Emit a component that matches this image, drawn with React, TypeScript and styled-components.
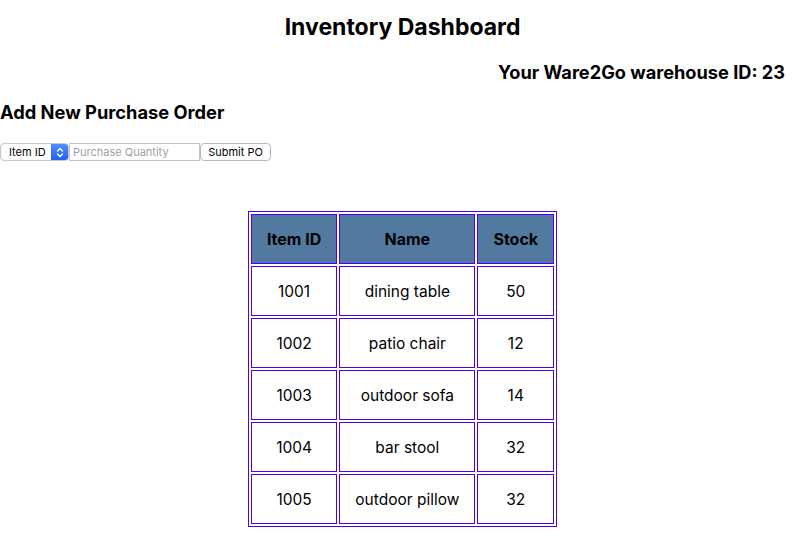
import React from "react";
import styled, { createGlobalStyle } from "styled-components";

const Global = createGlobalStyle`
  html, body { margin: 0; padding: 0; background: #fff; }
  body { font-family: Inter, "Noto Sans", sans-serif; color: #000; }
`;

const Page = styled.div`
  display: flex;
  flex-direction: column;
`;

const Title = styled.h1`
  margin: 13px 0 0;
  padding-left: 7px;
  font-size: 23px;
  line-height: 29px;
  font-weight: 700;
  text-align: center;
`;

const Warehouse = styled.h2`
  margin: 19px 13px 0 0;
  font-size: 18.2px;
  line-height: 23px;
  font-weight: 700;
  text-align: right;
`;

const Section = styled.h3`
  margin: 17px 0 0;
  font-size: 18.3px;
  line-height: 22px;
  font-weight: 700;
`;

const Form = styled.form`
  display: flex;
  align-items: center;
  margin-top: 20px;
  height: 18px;
`;

const SelectBox = styled.div`
  position: relative;
  display: flex;
  align-items: center;
  width: 69px;
  height: 18px;
  box-sizing: border-box;
  border: 1px solid #c8c8c8;
  border-radius: 4px;
  background: #fff;
  font-size: 11px;
  padding-left: 8px;
  overflow: hidden;
`;

const SelectArrow = styled.div`
  position: absolute;
  right: 0;
  top: 0;
  bottom: 0;
  width: 17px;
  background: linear-gradient(#4f8dff, #1f62f5);
  display: flex;
  align-items: center;
  justify-content: center;
`;

const Input = styled.input`
  width: 131px;
  height: 18px;
  box-sizing: border-box;
  border: 1px solid #c4c4c4;
  padding: 0 3px;
  font-family: inherit;
  font-size: 11px;
  outline: none;
  &::placeholder { color: #a0a0a0; }
`;

const Button = styled.button`
  width: 71px;
  height: 18px;
  box-sizing: border-box;
  border: 1px solid #b9b9b9;
  border-radius: 4px;
  background: #fff;
  font-family: inherit;
  font-size: 11px;
  padding: 0;
  color: #000;
`;

const TableWrap = styled.div`
  display: flex;
  justify-content: center;
  margin-top: 50px;
  padding-left: 7px;
`;

const Table = styled.table`
  border: 1px solid #4a00ff;
  border-spacing: 2px;
  font-size: 15.5px;
`;

const Th = styled.th`
  border: 1px solid #4a00ff;
  background: #527aa0;
  padding: 15px;
  line-height: 18px;
  font-size: 16px;
  font-weight: 700;
`;

const Td = styled.td`
  border: 1px solid #4a00ff;
  padding: 16px 15px 14px;
  line-height: 18px;
  text-align: center;
`;

const rows = [
  [1001, "dining table", 50],
  [1002, "patio chair", 12],
  [1003, "outdoor sofa", 14],
  [1004, "bar stool", 32],
  [1005, "outdoor pillow", 32],
];

export default function App() {
  return (
    <Page>
      <Global />
      <Title>Inventory Dashboard</Title>
      <Warehouse>Your Ware2Go warehouse ID: 23</Warehouse>
      <Section>Add New Purchase Order</Section>
      <Form onSubmit={(e) => e.preventDefault()}>
        <SelectBox>
          Item ID
          <SelectArrow>
            <svg width="8" height="11" viewBox="0 0 8 11">
              <path d="M1.5 4 L4 1.5 L6.5 4 M1.5 7 L4 9.5 L6.5 7" stroke="#fff" strokeWidth="1.4" fill="none" strokeLinecap="round" strokeLinejoin="round" />
            </svg>
          </SelectArrow>
        </SelectBox>
        <Input placeholder="Purchase Quantity" />
        <Button type="submit">Submit PO</Button>
      </Form>
      <TableWrap>
        <Table>
          <thead>
            <tr>
              <Th>Item ID</Th>
              <Th>Name</Th>
              <Th>Stock</Th>
            </tr>
          </thead>
          <tbody>
            {rows.map((r) => (
              <tr key={r[0]}>
                <Td>{r[0]}</Td>
                <Td>{r[1]}</Td>
                <Td>{r[2]}</Td>
              </tr>
            ))}
          </tbody>
        </Table>
      </TableWrap>
    </Page>
  );
}
